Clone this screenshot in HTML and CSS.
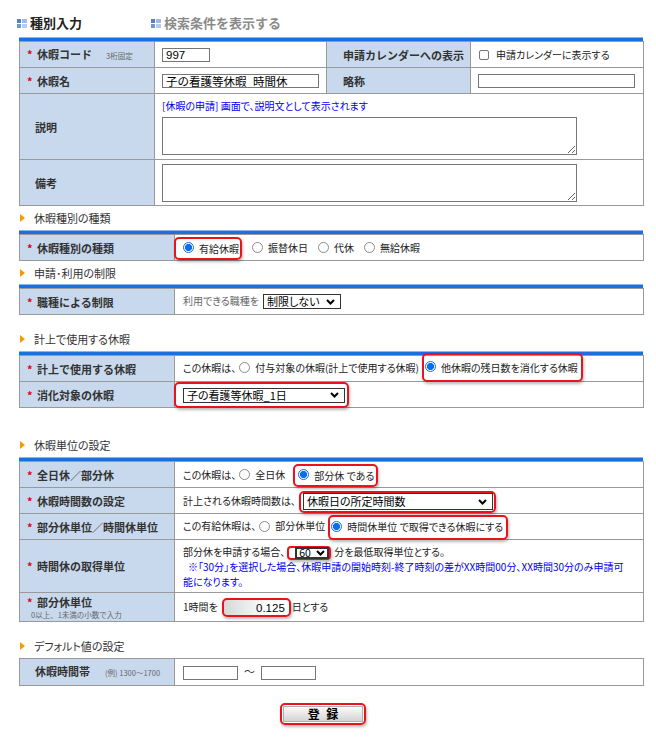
FILE: index.html
```html
<!DOCTYPE html>
<html lang="ja">
<head>
<meta charset="utf-8">
<title>種別入力</title>
<link rel="stylesheet" href="styles.css">
</head>
<body>
<div class="page">
  <div class="tabs">
    <div class="tab tab-on">
      <svg class="tab-ic" width="10" height="9" viewBox="0 0 10 9"><rect x="0" y="0" width="4" height="4" fill="#4f82c8"/><rect x="5" y="0" width="5" height="4" fill="#9dbbe3"/><rect x="0" y="5" width="4" height="4" fill="#6f98d2"/><rect x="5" y="5" width="5" height="4" fill="#b7cceb"/></svg>
      種別入力
    </div>
    <div class="tab tab-off">
      <svg class="tab-ic" width="10" height="9" viewBox="0 0 10 9"><rect x="0" y="0" width="4" height="4" fill="#4f82c8"/><rect x="5" y="0" width="5" height="4" fill="#9dbbe3"/><rect x="0" y="5" width="4" height="4" fill="#6f98d2"/><rect x="5" y="5" width="5" height="4" fill="#b7cceb"/></svg>
      検索条件を表示する
    </div>
  </div>

  <div class="bar"></div>
  <table class="tbl">
    <colgroup><col class="c135"><col class="c172"><col class="c144"><col class="c173"></colgroup>
    <tr class="r26">
      <td class="lab"><span class="req">*</span>休暇コード<span class="note">3桁固定</span></td>
      <td class="val v1"><input class="in w48" type="text" value="997"></td>
      <td class="lab lab-p2">申請カレンダーへの表示</td>
      <td class="val v1"><span class="chk"></span>申請カレンダーに表示する</td>
    </tr>
    <tr class="r26">
      <td class="lab"><span class="req">*</span>休暇名</td>
      <td class="val v1"><input class="in w157" type="text" value="子の看護等休暇_時間休"></td>
      <td class="lab lab-p2">略称</td>
      <td class="val v1"><input class="in w157" type="text" value=""></td>
    </tr>
    <tr class="r66">
      <td class="lab lab-p">説明</td>
      <td class="val v1" colspan="3">
        <div class="blue desc">[休暇の申請] 画面で、説明文として表示されます</div>
        <textarea class="ta"></textarea>
      </td>
    </tr>
    <tr class="r46">
      <td class="lab lab-p">備考</td>
      <td class="val v1" colspan="3"><textarea class="ta"></textarea></td>
    </tr>
  </table>

  <div class="sec">休暇種別の種類</div>
  <div class="bar"></div>
  <table class="tbl">
    <colgroup><col class="c155"><col class="c469"></colgroup>
    <tr class="r26">
      <td class="lab"><span class="req">*</span>休暇種別の種類</td>
      <td class="val"><span class="hl hl-a"><span class="rd on"></span>有給休暇</span><span class="opt"><span class="rd"></span>振替休日</span><span class="opt"><span class="rd"></span>代休</span><span class="opt"><span class="rd"></span>無給休暇</span></td>
    </tr>
  </table>

  <div class="sec s23">申請･利用の制限</div>
  <div class="bar"></div>
  <table class="tbl">
    <colgroup><col class="c155"><col class="c469"></colgroup>
    <tr class="r26">
      <td class="lab"><span class="req">*</span>職種による制限</td>
      <td class="val"><span class="gray">利用できる職種を</span><span class="sel w78">制限しない<svg width="9" height="6" viewBox="0 0 9 6"><path d="M1 1 L4.5 4.5 L8 1" fill="none" stroke="#000" stroke-width="2"/></svg></span></td>
    </tr>
  </table>

  <div class="sec mt12">計上で使用する休暇</div>
  <div class="bar"></div>
  <table class="tbl">
    <colgroup><col class="c155"><col class="c469"></colgroup>
    <tr class="r26">
      <td class="lab"><span class="req">*</span>計上で使用する休暇</td>
      <td class="val">この休暇は、<span class="opt0"><span class="rd"></span>付与対象の休暇(計上で使用する休暇)</span><span class="hl hl-b"><span class="rd on"></span>他休暇の残日数を消化する休暇</span></td>
    </tr>
    <tr class="r26">
      <td class="lab"><span class="req">*</span>消化対象の休暇</td>
      <td class="val"><span class="hl hl-c"><span class="sel w162">子の看護等休暇_1日<svg width="9" height="6" viewBox="0 0 9 6"><path d="M1 1 L4.5 4.5 L8 1" fill="none" stroke="#000" stroke-width="2"/></svg></span></span></td>
    </tr>
  </table>

  <div class="sec mt25">休暇単位の設定</div>
  <div class="bar"></div>
  <table class="tbl">
    <colgroup><col class="c155"><col class="c469"></colgroup>
    <tr class="r26">
      <td class="lab"><span class="req">*</span>全日休／部分休</td>
      <td class="val">この休暇は、<span class="opt0"><span class="rd"></span>全日休</span><span class="hl hl-d"><span class="rd on"></span>部分休 である</span></td>
    </tr>
    <tr class="r26">
      <td class="lab"><span class="req">*</span>休暇時間数の設定</td>
      <td class="val">計上される休暇時間数は、<span class="hl hl-e"><span class="sel w190">休暇日の所定時間数<svg width="9" height="6" viewBox="0 0 9 6"><path d="M1 1 L4.5 4.5 L8 1" fill="none" stroke="#000" stroke-width="2"/></svg></span></span></td>
    </tr>
    <tr class="r26">
      <td class="lab"><span class="req">*</span>部分休単位／時間休単位</td>
      <td class="val">この有給休暇は、<span class="opt0"><span class="rd"></span>部分休単位</span><span class="hl hl-f"><span class="rd on"></span>時間休単位 で取得できる休暇にする</span></td>
    </tr>
    <tr class="r53">
      <td class="lab"><span class="req">*</span>時間休の取得単位</td>
      <td class="val multi">
        <div class="line">部分休を申請する場合、<span class="hl hl-g"><span class="sel w34">60<svg width="9" height="6" viewBox="0 0 9 6"><path d="M1 1 L4.5 4.5 L8 1" fill="none" stroke="#000" stroke-width="2"/></svg></span></span>分を最低取得単位とする。</div>
        <div class="blue note2"><span class="ind"></span>※「30分」を選択した場合、休暇申請の開始時刻-終了時刻の差がXX時間00分、XX時間30分のみ申請可<br>能になります。</div>
      </td>
    </tr>
    <tr class="r29">
      <td class="lab"><div class="lab-main"><span class="req">*</span>部分休単位</div><div class="sub">0以上、1未満の小数で入力</div></td>
      <td class="val">1時間を<span class="hl hl-h"><input class="in num" type="text" value="0.125"></span>日とする</td>
    </tr>
  </table>

  <div class="sec mt12">デフォルト値の設定</div>
  <table class="tbl">
    <colgroup><col class="c155"><col class="c469"></colgroup>
    <tr class="r27">
      <td class="lab lab-p">休暇時間帯<span class="note note-b">(例) 1300～1700</span></td>
      <td class="val"><input class="in w55" type="text" value=""><span class="tilde">～</span><input class="in w55" type="text" value=""></td>
    </tr>
  </table>

  <div class="btn-row">
    <span class="btn-hl"><span class="btn">登 録</span></span>
  </div>
</div>
</body>
</html>
```
FILE: styles.css
```css
* { box-sizing: border-box; margin: 0; padding: 0; }

body {
  font-family: "Noto Sans CJK JP", "Noto Sans", sans-serif;
  font-size: 10px;
  color: #222;
  background: #fff;
}

.page {
  width: 656px;
  padding: 0 13px 20px 19px;
}

/* header tabs */
.tabs {
  display: flex;
  align-items: center;
  height: 37px;
  padding-top: 9px;
}
.tab {
  display: flex;
  align-items: center;
  font-size: 13px;
  font-weight: bold;
  line-height: 16px;
}
.tab-ic { margin-right: 3px; }
.tab-on { margin-left: -2px; width: 134px; color: #222; }
.tab-off { color: #8a8a8a; }

.bar {
  height: 4px;
  background: linear-gradient(#86b6f2 0 1px, #1d6fe0 1px);
}

/* tables */
.tbl {
  width: 624px;
  border-collapse: collapse;
  table-layout: fixed;
}
.tbl td {
  border: 1px solid #999;
  vertical-align: middle;
}
.c135 { width: 135px; }
.c172 { width: 172px; }
.c144 { width: 144px; }
.c173 { width: 173px; }
.c155 { width: 155px; }
.c469 { width: 469px; }

.r26 td { height: 26px; }
.r27 td { height: 27px; }
.r29 td { height: 29px; }
.r46 td { height: 46px; }
.r53 td { height: 53px; }
.r66 td { height: 66px; }

.lab {
  background: #c8d9ee;
  font-size: 11px;
  font-weight: bold;
  color: #333;
  padding-left: 7px;
  white-space: nowrap;
  line-height: 14px;
}
.lab-p { padding-left: 15px; }
.lab-p2 { padding-left: 16px; }
.req {
  display: inline-block;
  width: 10px;
  color: #e60012;
}
.note {
  font-size: 7.5px;
  font-weight: normal;
  color: #666;
  margin-left: 14px;
}
.note-b { margin-left: 15px; }
.lab-main { line-height: 13px; }
.sub {
  font-size: 7.5px;
  font-weight: normal;
  color: #666;
  margin-left: 4px;
  margin-top: 1px;
  line-height: 9px;
}

.val {
  padding: 0 6px 0 8px;
  white-space: nowrap;
  line-height: 14px;
  font-feature-settings: "palt";
  color: #222;
}
.val.v1 { padding-left: 7px; }

.blue { color: #0000f0; }
.desc { line-height: 14px; margin-bottom: 4px; }
.gray { color: #666; margin-right: 4px; }

/* form controls */
.in {
  display: inline-block;
  vertical-align: middle;
  height: 14px;
  border: 1px solid #767676;
  padding: 0 3px;
  font: 11.5px "Liberation Sans", "Noto Sans CJK JP", sans-serif;
  color: #000;
  background: #fff;
  outline: none;
}
.w48 { width: 48px; }
.w55 { width: 55px; }
.w157 { width: 157px; }
.num { width: 64px; height: 15px; text-align: right; }

.ta {
  display: block;
  width: 415px;
  height: 38px;
  border: 1px solid #767676;
  resize: both;
  font: 11px "Noto Sans CJK JP", sans-serif;
}

.chk {
  display: inline-block;
  vertical-align: middle;
  width: 10px;
  height: 10px;
  border: 1px solid #767676;
  border-radius: 2px;
  margin: 0 7px 0 1px;
  position: relative;
  top: -1px;
}

.rd {
  display: inline-block;
  vertical-align: middle;
  width: 11px;
  height: 11px;
  border: 1px solid #8a8a8a;
  border-radius: 50%;
  margin-right: 5px;
  position: relative;
  top: -1px;
  background: #fff;
}
.rd.on {
  border-color: #0a6cf0;
  background: radial-gradient(circle, #0a6cf0 0 3.2px, #fff 3.9px);
}

.opt { margin-left: 10px; }
.opt0 { margin-left: 3px; }

.sel {
  display: inline-flex;
  align-items: center;
  justify-content: space-between;
  vertical-align: middle;
  height: 15px;
  border: 1px solid #333;
  background: #fff;
  font-size: 11px;
  line-height: 13px;
  color: #000;
  padding: 0 5px 0 3px;
}
.w34 { width: 34px; height: 12px; border-width: 2px; padding: 0 2px 0 2px; font-size: 10.5px; line-height: 10px; }
.w78 { width: 78px; }
.w162 { width: 162px; }
.w190 { width: 190px; height: 17px; }

/* red highlight boxes */
.hl {
  display: inline-flex;
  align-items: center;
  vertical-align: middle;
  border: 2px solid #e8141c;
  border-radius: 5px;
  box-shadow: 1px 2px 3px rgba(0, 0, 0, 0.28);
}
.hl-a { height: 23px; margin: -6px 0 -6px -9px; padding: 0 1px 0 7px; }
.hl-b { height: 29px; margin: -8px 0 -6px 3px; padding: 0 3px 0 1px; }
.hl-c { height: 26px; margin: -6px 0 -6px -9px; padding: 0 2px 0 7px; }
.hl-d { height: 23px; margin: -6px 0 -6px 8px; padding: 0 2px 0 3px; }
.hl-e { height: 22px; margin: -6px 0 -6px 3px; padding: 0 1px 0 2px; }
.hl-f { height: 25px; margin: -6px 0 -6px 3px; padding: 0 3px 0 1px; }
.hl-g { height: 14px; margin: -3px 3px -3px 2px; padding: 0 0 0 6px; border-radius: 4px; }
.hl-h { height: 19px; margin: -3px 1px -3px 4px; padding: 0 0 0 1px; background: linear-gradient(to right, #d8d8d8, #fff 70%); }
.hl-h .num { border-color: transparent; background: transparent; }

.multi { line-height: 15px; }
.line { line-height: 15px; height: 15px; }
.note2 { line-height: 15px; }
.ind { display: inline-block; width: 5px; }

.tilde { margin: 0 6px 0 6px; font-size: 11px; color: #333; }

/* section headings */
.sec {
  display: flex;
  align-items: center;
  height: 24px;
  font-size: 11px;
  color: #333;
  font-feature-settings: "palt";
}
.sec::before {
  content: "";
  border-left: 5px solid #f39c00;
  border-top: 4px solid transparent;
  border-bottom: 4px solid transparent;
  margin: 0 9px 0 1px;
}
.s23 { height: 23px; }
.mt12 { margin-top: 12px; }
.mt25 { margin-top: 25px; }

/* button */
.btn-row { padding: 17px 0 0 261px; }
.btn-hl {
  display: inline-block;
  border: 2px solid #e8141c;
  border-radius: 5px;
  padding: 1px;
  box-shadow: 1px 2px 3px rgba(0, 0, 0, 0.28);
}
.btn {
  display: block;
  width: 80px;
  height: 16px;
  border: 1px solid #b0b0b0;
  background: linear-gradient(#fafafa, #d4d4d4);
  font-size: 12px;
  font-weight: bold;
  line-height: 14px;
  text-align: center;
  color: #000;
  word-spacing: 4px;
}
```
